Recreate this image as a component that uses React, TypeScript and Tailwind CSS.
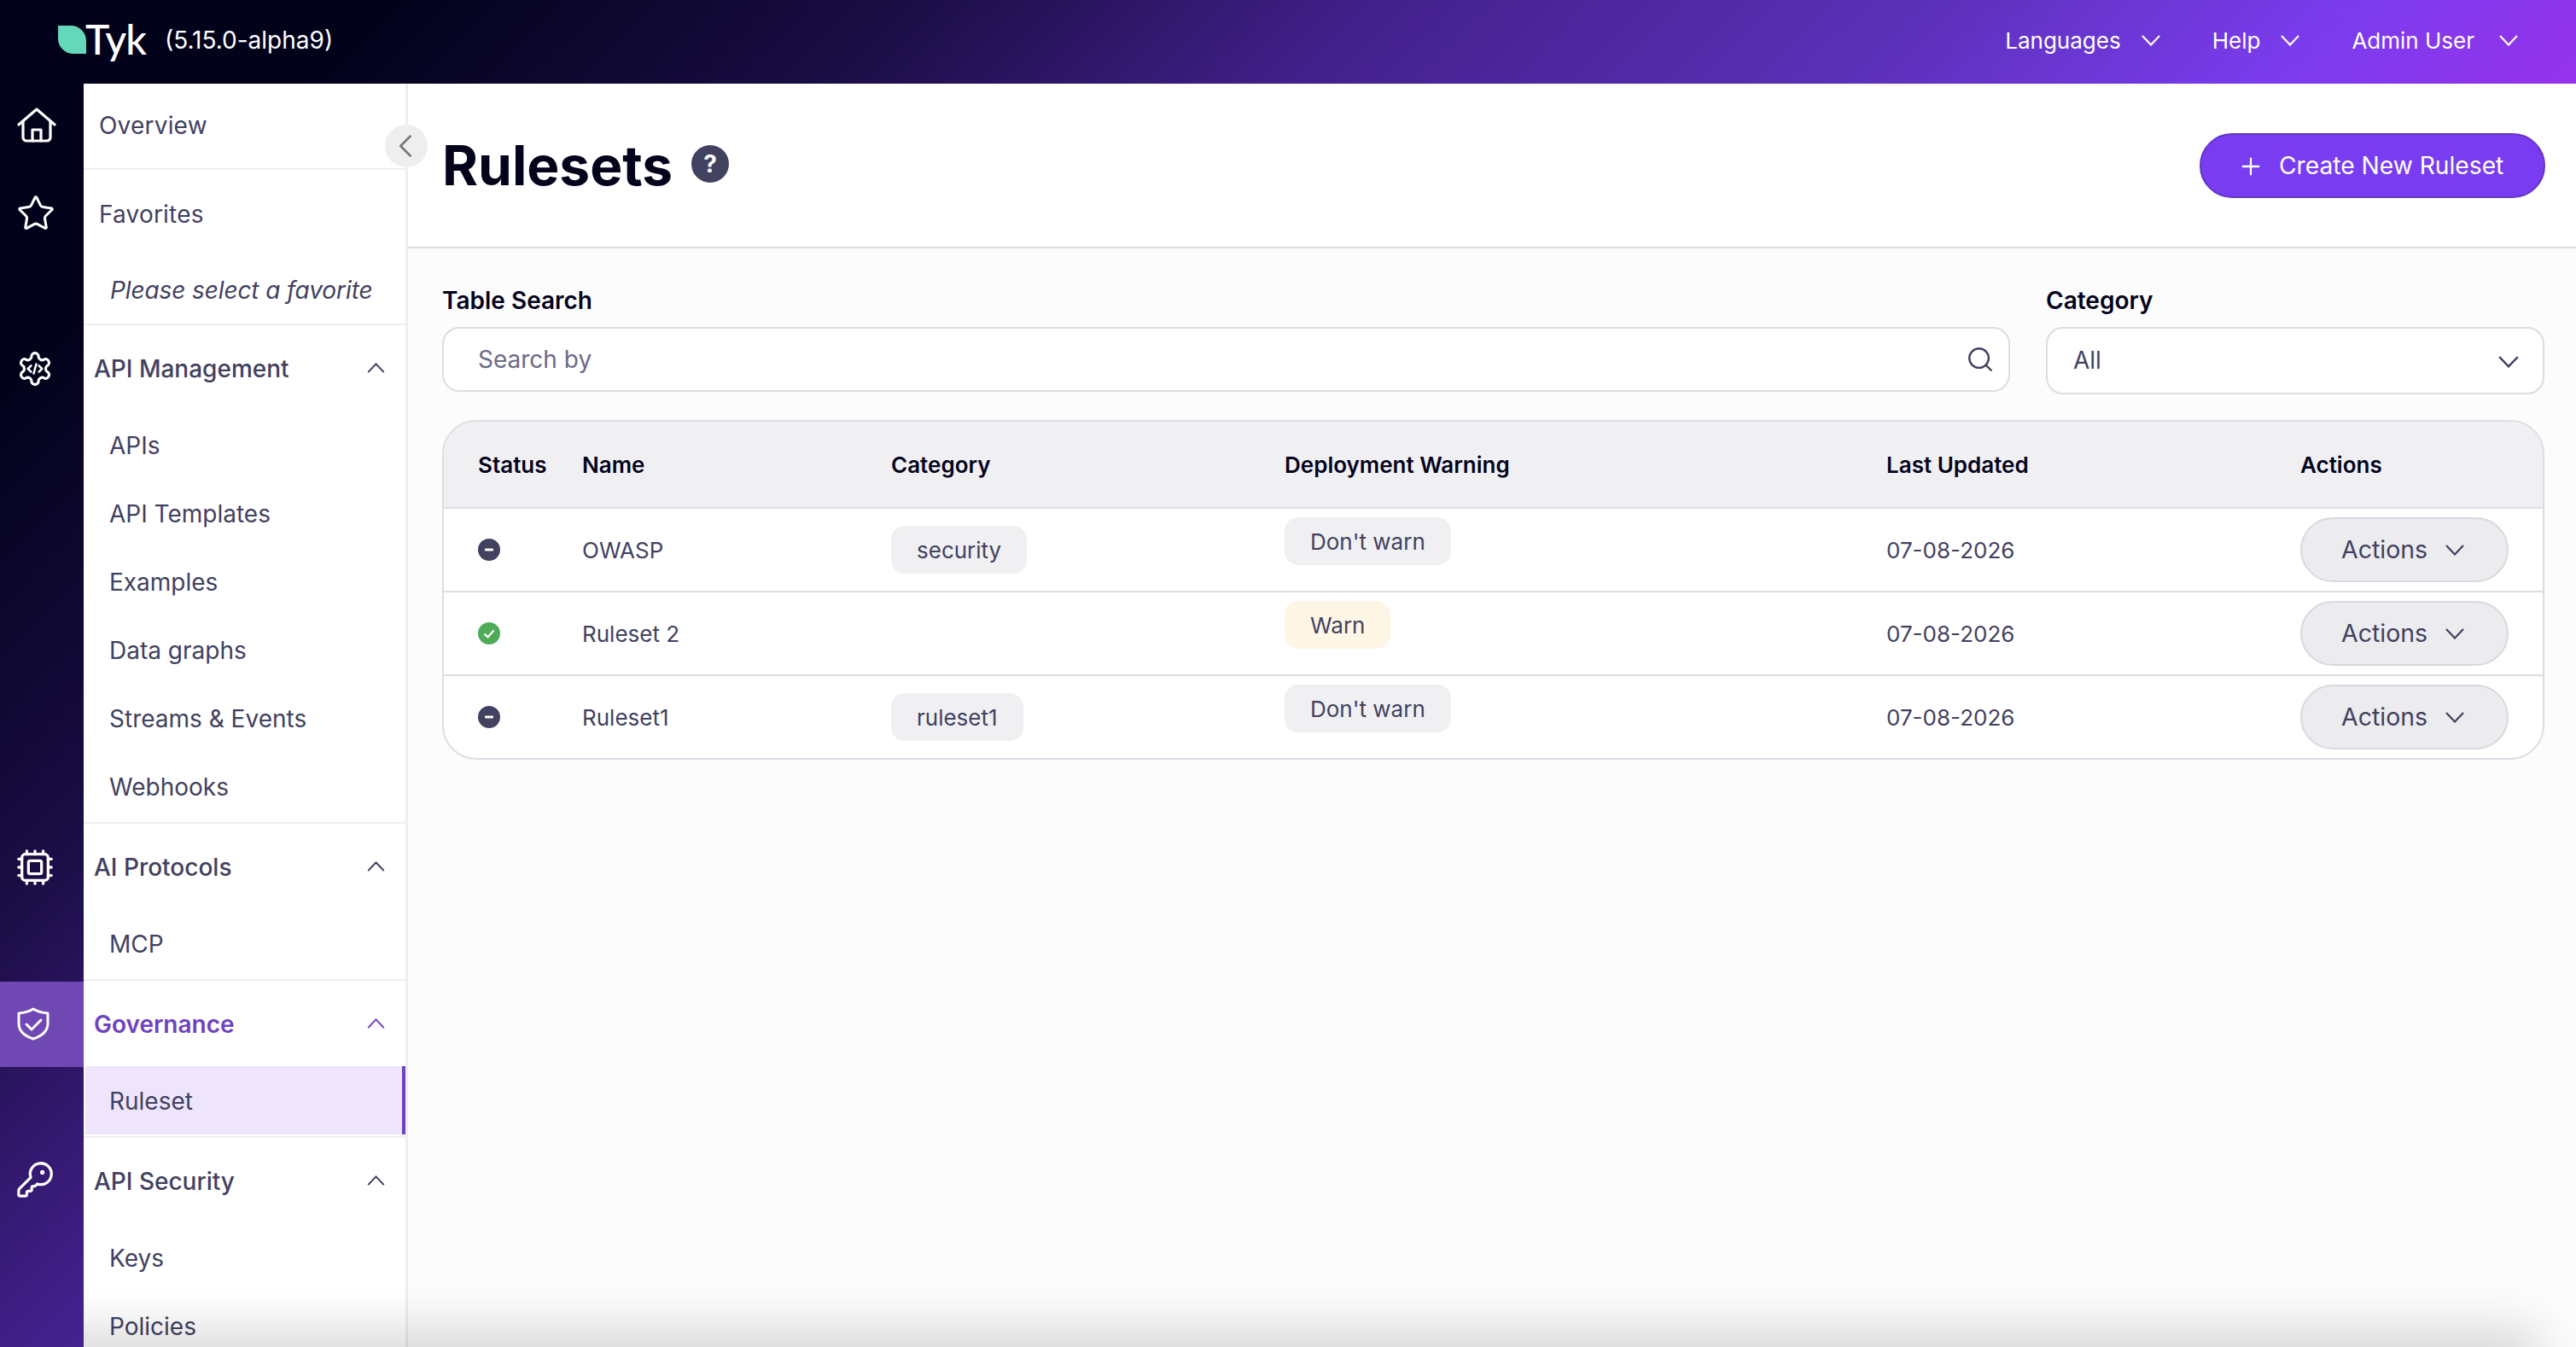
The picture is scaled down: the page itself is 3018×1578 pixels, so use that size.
import { ChevronLeft, Cpu, KeyRound, Plus, Search, Star } from "lucide-react"

function Chevron({ up, className }: { up?: boolean; className?: string }) {
  return (
    <svg viewBox="0 0 22 13" fill="none" className={className}>
      <path d={up ? "M1 12 L11 1.5 L21 12" : "M1 1 L11 11.5 L21 1"} stroke="currentColor" strokeWidth="2.2" />
    </svg>
  )
}

function HomeIcon() {
  return (
    <svg viewBox="0 0 46 42" fill="none" stroke="white" strokeWidth="3.2" strokeLinecap="round" strokeLinejoin="round" className="h-[42px] w-[46px]">
      <path d="M2 20 L23 2 L44 20" />
      <path d="M7 16 V35 a4 4 0 0 0 4 4 H35 a4 4 0 0 0 4 -4 V16" />
      <path d="M18 39 V26 H28 V39" />
    </svg>
  )
}

function GearCodeIcon() {
  return (
    <svg viewBox="0 0 24 24" fill="none" stroke="white" strokeWidth="1.7" strokeLinecap="round" strokeLinejoin="round" className="size-[44px]">
      <path d="M12.22 2h-.44a2 2 0 0 0-2 2v.18a2 2 0 0 1-1 1.73l-.43.25a2 2 0 0 1-2 0l-.15-.08a2 2 0 0 0-2.73.73l-.22.38a2 2 0 0 0 .73 2.73l.15.1a2 2 0 0 1 1 1.72v.51a2 2 0 0 1-1 1.74l-.15.09a2 2 0 0 0-.73 2.73l.22.38a2 2 0 0 0 2.73.73l.15-.08a2 2 0 0 1 2 0l.43.25a2 2 0 0 1 1 1.73V20a2 2 0 0 0 2 2h.44a2 2 0 0 0 2-2v-.18a2 2 0 0 1 1-1.73l.43-.25a2 2 0 0 1 2 0l.15.08a2 2 0 0 0 2.73-.73l.22-.39a2 2 0 0 0-.73-2.73l-.15-.08a2 2 0 0 1-1-1.74v-.5a2 2 0 0 1 1-1.74l.15-.09a2 2 0 0 0 .73-2.73l-.22-.38a2 2 0 0 0-2.73-.73l-.15.08a2 2 0 0 1-2 0l-.43-.25a2 2 0 0 1-1-1.73V4a2 2 0 0 0-2-2z" />
      <path d="M9.5 10l-2 2 2 2M14.5 10l2 2-2 2M12.8 9l-1.6 6" strokeWidth="1.4" />
    </svg>
  )
}

function ShieldIcon() {
  return (
    <svg viewBox="0 0 38 39" fill="none" stroke="white" strokeWidth="3" strokeLinecap="round" strokeLinejoin="round" className="h-[39px] w-[38px]">
      <path d="M19 2 C24 5 30 6.5 36 7 V19 C36 28 28 34 19 37 C10 34 2 28 2 19 V7 C8 6.5 14 5 19 2Z" />
      <path d="M11 20 L17 26 L28 15" />
    </svg>
  )
}

function RailSlot({ height, active, children }: { height: string; active?: boolean; children: React.ReactNode }) {
  return (
    <div className={height}>
      <div className={"flex h-[100px] items-center justify-center pr-[16px] " + (active ? "bg-[#7048b4]" : "")}>{children}</div>
    </div>
  )
}

function Rail() {
  return (
    <div className="flex w-[98px] shrink-0 flex-col">
      <div className="flex h-[100px] items-center justify-center pb-[2px] pr-[12px]"><HomeIcon /></div>
      <RailSlot height="h-[184px]"><Star className="size-[46px] translate-x-[1px] translate-y-[2px] text-white" strokeWidth={1.6} /></RailSlot>
      <RailSlot height="h-[584px]"><GearCodeIcon /></RailSlot>
      <RailSlot height="h-[184px]"><Cpu className="size-[46px] text-white" strokeWidth={1.7} /></RailSlot>
      <RailSlot height="h-[184px]" active><div className="-translate-x-[2px] -translate-y-[1px]"><ShieldIcon /></div></RailSlot>
      <RailSlot height="h-[184px]"><KeyRound className="size-[46px] -translate-y-[2px] text-white" strokeWidth={1.7} /></RailSlot>
    </div>
  )
}

function NavSection({ title, items, active }: { title: string; items: string[]; active?: boolean }) {
  return (
    <div className="-ml-[4px] border-b-2 border-[#eeeef0] pb-[2px] pl-[4px]">
      <div className={"flex h-[100px] items-center justify-between pl-[12px] pr-[24px] pt-[1px] " + (active ? "font-semibold text-[#6f42c1]" : "font-medium text-[#414160]")}>
        <span>{title}</span>
        <Chevron up className="-translate-y-[1px] h-[12px] w-[21px]" />
      </div>
      {items.map((item) => (
        <div
          key={item}
          className={"flex h-[80px] items-center pt-[2px] " + (active ? "ml-[2px] border-r-4 border-[#6f42c1] bg-[#eee4fb] pl-[28px]" : "pl-[30px]")}
        >
          {item}
        </div>
      ))}
    </div>
  )
}

function Sidebar() {
  return (
    <div className="relative z-10 w-[380px] shrink-0 border-r-[3px] border-[#eeeef0] bg-white text-[28px] text-[#414160]">
      <div className="-ml-[4px] flex h-[101px] items-center border-b-2 border-[#eeeef0] pb-[2px] pl-[22px] tracking-[0.2px]">Overview</div>
      <div className="-ml-[4px] h-[182px] border-b-2 border-[#eeeef0] pl-[22px] tracking-[0.2px]">
        <div className="flex h-[102px] items-center pt-[2px]">Favorites</div>
        <div className="pl-[13px] italic leading-[78px] tracking-[-0.1px]">Please select a favorite</div>
      </div>
      <NavSection title="API Management" items={["APIs", "API Templates", "Examples", "Data graphs", "Streams & Events", "Webhooks"]} />
      <NavSection title="AI Protocols" items={["MCP"]} />
      <NavSection title="Governance" items={["Ruleset"]} active />
      <NavSection title="API Security" items={["Keys", "Policies"]} />
      <button className="absolute -right-[26px] top-[48px] z-10 flex size-[50px] items-center justify-center rounded-full bg-[#eeeeee] text-[#777777]">
        <ChevronLeft className="size-[46px] -translate-x-[1px]" strokeWidth={1.3} />
      </button>
    </div>
  )
}

const rowCols = "grid grid-cols-[122px_362px_461px_705px_485px_1fr] pl-[40px]"

const rows = [
  { name: "OWASP", category: "security", warn: false, on: false },
  { name: "Ruleset 2", category: "", warn: true, on: true },
  { name: "Ruleset1", category: "ruleset1", warn: false, on: false },
]

function StatusDot({ on }: { on: boolean }) {
  return on ? (
    <svg viewBox="0 0 26 26" className="size-[26px]">
      <circle cx="13" cy="13" r="13" fill="#4fab58" />
      <path d="M7.5 13.5 L11.5 17.5 L18.5 9.5" fill="none" stroke="white" strokeWidth="2.2" />
    </svg>
  ) : (
    <svg viewBox="0 0 26 26" className="size-[26px]">
      <circle cx="13" cy="13" r="13" fill="#414160" />
      <rect x="8" y="11.5" width="10" height="3" rx="1" fill="white" />
    </svg>
  )
}

function RulesTable() {
  return (
    <div className="mt-[30px] overflow-hidden rounded-[40px] border-2 border-[#dcdce4] bg-white">
      <div className={rowCols + " h-[100px] items-center bg-[#f0f0f3] text-[26px] font-semibold text-[#03031c]"}>
        <span>Status</span>
        <span>Name</span>
        <span>Category</span>
        <span>Deployment Warning</span>
        <span>Last Updated</span>
        <span>Actions</span>
      </div>
      {rows.map((row) => (
        <div key={row.name} className={rowCols + " h-[98px] items-center border-t-2 border-[#dcdce4] text-[26px] text-[#414160]"}>
          <StatusDot on={row.on} />
          <span>{row.name}</span>
          <div>
            {row.category && (
              <span className="inline-flex h-[56px] items-center rounded-[16px] bg-[#f0f0f3] px-[30px]">{row.category}</span>
            )}
          </div>
          <div className="-mt-[20px]">
            <span className={"inline-flex h-[56px] items-center rounded-[16px] px-[30px] " + (row.warn ? "bg-[#fdf6e5]" : "bg-[#f0f0f3]")}>
              {row.warn ? "Warn" : "Don't warn"}
            </span>
          </div>
          <span>07-08-2026</span>
          <button className="flex h-[76px] w-[244px] items-center rounded-full border-2 border-[#d8d8e0] bg-[#ececef] pl-[46px] text-[28.5px]">
            Actions
            <Chevron className="ml-[20px] h-[13px] w-[24px]" />
          </button>
        </div>
      ))}
    </div>
  )
}

export default function App() {
  return (
    <div className="flex h-screen w-full flex-col overflow-hidden bg-[linear-gradient(135deg,#02021b_0%,#02021b_10%,#1a0d44_23%,#42208a_35%,#5b30b8_49%,#7b3cee_60%,#9333ea_67%)] font-[Inter,sans-serif]">
      <header className="flex h-[98px] shrink-0 items-center justify-between text-[26px] text-white">
        <div className="flex items-center pl-[68px]">
          <div className="h-[33px] w-[33px] -translate-y-[3px] rounded-tr-[18px] rounded-bl-[18px] bg-[#64d8b8]" />
          <span className="-ml-[1px] -translate-y-[3px] font-[Lato,sans-serif] text-[48px] font-medium leading-none tracking-[-1px]">Tyk</span>
          <span className="ml-[22px] -translate-y-[2px] text-[28px]">(5.15.0-alpha9)</span>
        </div>
        <nav className="flex -translate-y-[2px] items-center pr-[68px]">
          <span>Languages</span>
          <Chevron className="ml-[24px] h-[13px] w-[22px]" />
          <span className="ml-[61px]">Help</span>
          <Chevron className="ml-[24px] h-[13px] w-[22px]" />
          <span className="ml-[61px]">Admin User</span>
          <Chevron className="ml-[29px] h-[13px] w-[22px]" />
        </nav>
      </header>
      <div className="flex min-h-0 flex-1">
        <Rail />
        <div className="relative flex flex-1 overflow-hidden">
          <Sidebar />
          <main className="flex-1 bg-[#fcfcfc]">
            <div className="flex h-[193px] items-center justify-between border-b-2 border-[#dcdce4] bg-white pl-[40px] pr-[36px]">
              <div className="flex items-center">
                <h1 className="text-[64px] font-bold text-[#03031c]">Rulesets</h1>
                <span className="ml-[22px] flex size-[44px] -translate-y-[2px] items-center justify-center rounded-full bg-[#414160] text-[28px] font-bold text-white">?</span>
              </div>
              <button className="flex h-[76px] w-[405px] items-center rounded-full border-2 border-[#6237c3] bg-[#7a3cf0] pl-[42px] pt-[2px] text-[28.2px] text-white">
                <Plus className="size-[32px]" strokeWidth={1.7} />
                <span className="ml-[17px]">Create New Ruleset</span>
              </button>
            </div>
            <div className="pl-[40px] pr-[37px] pt-[44px]">
              <div className="flex gap-[42px]">
                <div className="flex-1">
                  <div className="mb-[14px] text-[28px] font-semibold leading-[34px] text-[#03031c]">Table Search</div>
                  <div className="flex h-[76px] items-center justify-between rounded-[20px] border-2 border-[#dcdce4] bg-white pl-[40px] pr-[16px] text-[28px] text-[#6b6b85]">
                    Search by
                    <Search className="size-[34px] text-[#414160]" strokeWidth={1.7} />
                  </div>
                </div>
                <div className="w-[584px]">
                  <div className="mb-[14px] text-[28px] font-semibold leading-[34px] text-[#03031c]">Category</div>
                  <div className="flex h-[79px] items-center justify-between rounded-[20px] border-2 border-[#dcdce4] bg-white pb-[2px] pl-[30px] pr-[28px] text-[28px] text-[#414160]">
                    All
                    <Chevron className="translate-y-[2px] h-[14px] w-[24px]" />
                  </div>
                </div>
              </div>
              <RulesTable />
            </div>
          </main>
          <div className="pointer-events-none absolute -bottom-[20px] -left-[60px] right-[60px] z-20 h-[20px] shadow-[0_0_60px_14px_rgba(0,0,0,0.2)]" />
        </div>
      </div>
    </div>
  )
}
